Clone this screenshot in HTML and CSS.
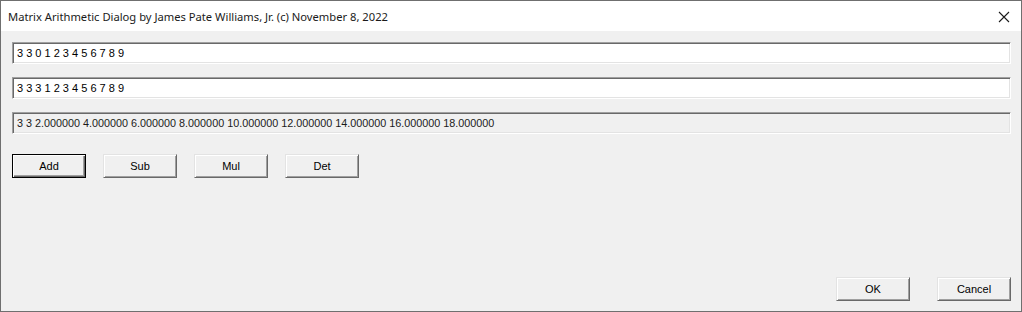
FILE: index.html
```html
<!DOCTYPE html>
<html lang="en">
<head>
    <meta charset="UTF-8">
    <title>Matrix Arithmetic Dialog</title>
    <link rel="stylesheet" href="styles.css">
</head>
<body>

    <div class="window">
        <!-- Title bar -->
        <div class="title-bar">
            <span class="title">Matrix Arithmetic Dialog by James Pate Williams, Jr. (c) November 8, 2022</span>
            <svg class="close" width="12" height="12" viewBox="0 0 12 12">
                <path d="M1 1 L11 11 M11 1 L1 11" stroke="#1a1a1a" stroke-width="1.1" fill="none"/>
            </svg>
        </div>

        <div class="client">
            <div class="edit">3 3 0 1 2 3 4 5 6 7 8 9</div>
            <div class="edit">3 3 3 1 2 3 4 5 6 7 8 9</div>
            <div class="edit result">3 3 2.000000 4.000000 6.000000 8.000000 10.000000 12.000000 14.000000 16.000000 18.000000</div>

            <div class="ops">
                <button class="btn default">Add</button>
                <button class="btn">Sub</button>
                <button class="btn">Mul</button>
                <button class="btn">Det</button>
            </div>

            <div class="footer">
                <button class="btn">OK</button>
                <button class="btn">Cancel</button>
            </div>
        </div>
    </div>

</body>
</html>
```

FILE: styles.css
```css
body {
    margin: 0;
    padding: 0;
    background-color: #f0f0f0;
    font-family: "Liberation Sans", Arial, sans-serif;
}

.window {
    width: 1022px;
    height: 312px;
    box-sizing: border-box;
    border: 1px solid #6f6f6f;
    display: flex;
    flex-direction: column;
    background-color: #f0f0f0;
}

.title-bar {
    height: 30px;
    background-color: #ffffff;
    display: flex;
    align-items: center;
    justify-content: space-between;
    padding: 0 11px 0 7px;
}

.title {
    font-family: "Noto Sans", sans-serif;
    font-size: 11.2px;
    color: #1a1a1a;
}

.close {
    margin-top: 1px;
}

.client {
    flex: 1;
    display: flex;
    flex-direction: column;
    padding: 11px 10px 10px 11px;
}

.edit {
    height: 22px;
    box-sizing: border-box;
    background-color: #ffffff;
    border-top: 1px solid #a0a0a0;
    border-left: 1px solid #a0a0a0;
    border-right: 1px solid #ffffff;
    border-bottom: 1px solid #ffffff;
    box-shadow: inset 1px 1px 0 #696969, inset -1px -1px 0 #e3e3e3;
    font-size: 11px;
    color: #000;
    padding: 4px 0 0 4px;
    margin-bottom: 13px;
    white-space: nowrap;
}

.result {
    background-color: #f0f0f0;
    color: #1a1a1a;
    font-size: 10.8px;
}

.ops {
    display: flex;
    gap: 17px;
    margin-top: 7px;
}

.btn {
    width: 74px;
    height: 24px;
    box-sizing: border-box;
    background-color: #f0f0f0;
    font-family: "Liberation Sans", Arial, sans-serif;
    font-size: 11px;
    color: #000;
    padding: 0;
    border-top: 1px solid #e3e3e3;
    border-left: 1px solid #e3e3e3;
    border-right: 1px solid #696969;
    border-bottom: 1px solid #696969;
    box-shadow: inset 1px 1px 0 #ffffff, inset -1px -1px 0 #a0a0a0;
}

.btn.default {
    border: 1px solid #000;
    box-shadow: inset 1px 1px 0 #ffffff, inset -1px -1px 0 #696969, inset -2px -2px 0 #a0a0a0;
}

.footer {
    margin-top: auto;
    display: flex;
    justify-content: flex-end;
    gap: 27px;
}
```
